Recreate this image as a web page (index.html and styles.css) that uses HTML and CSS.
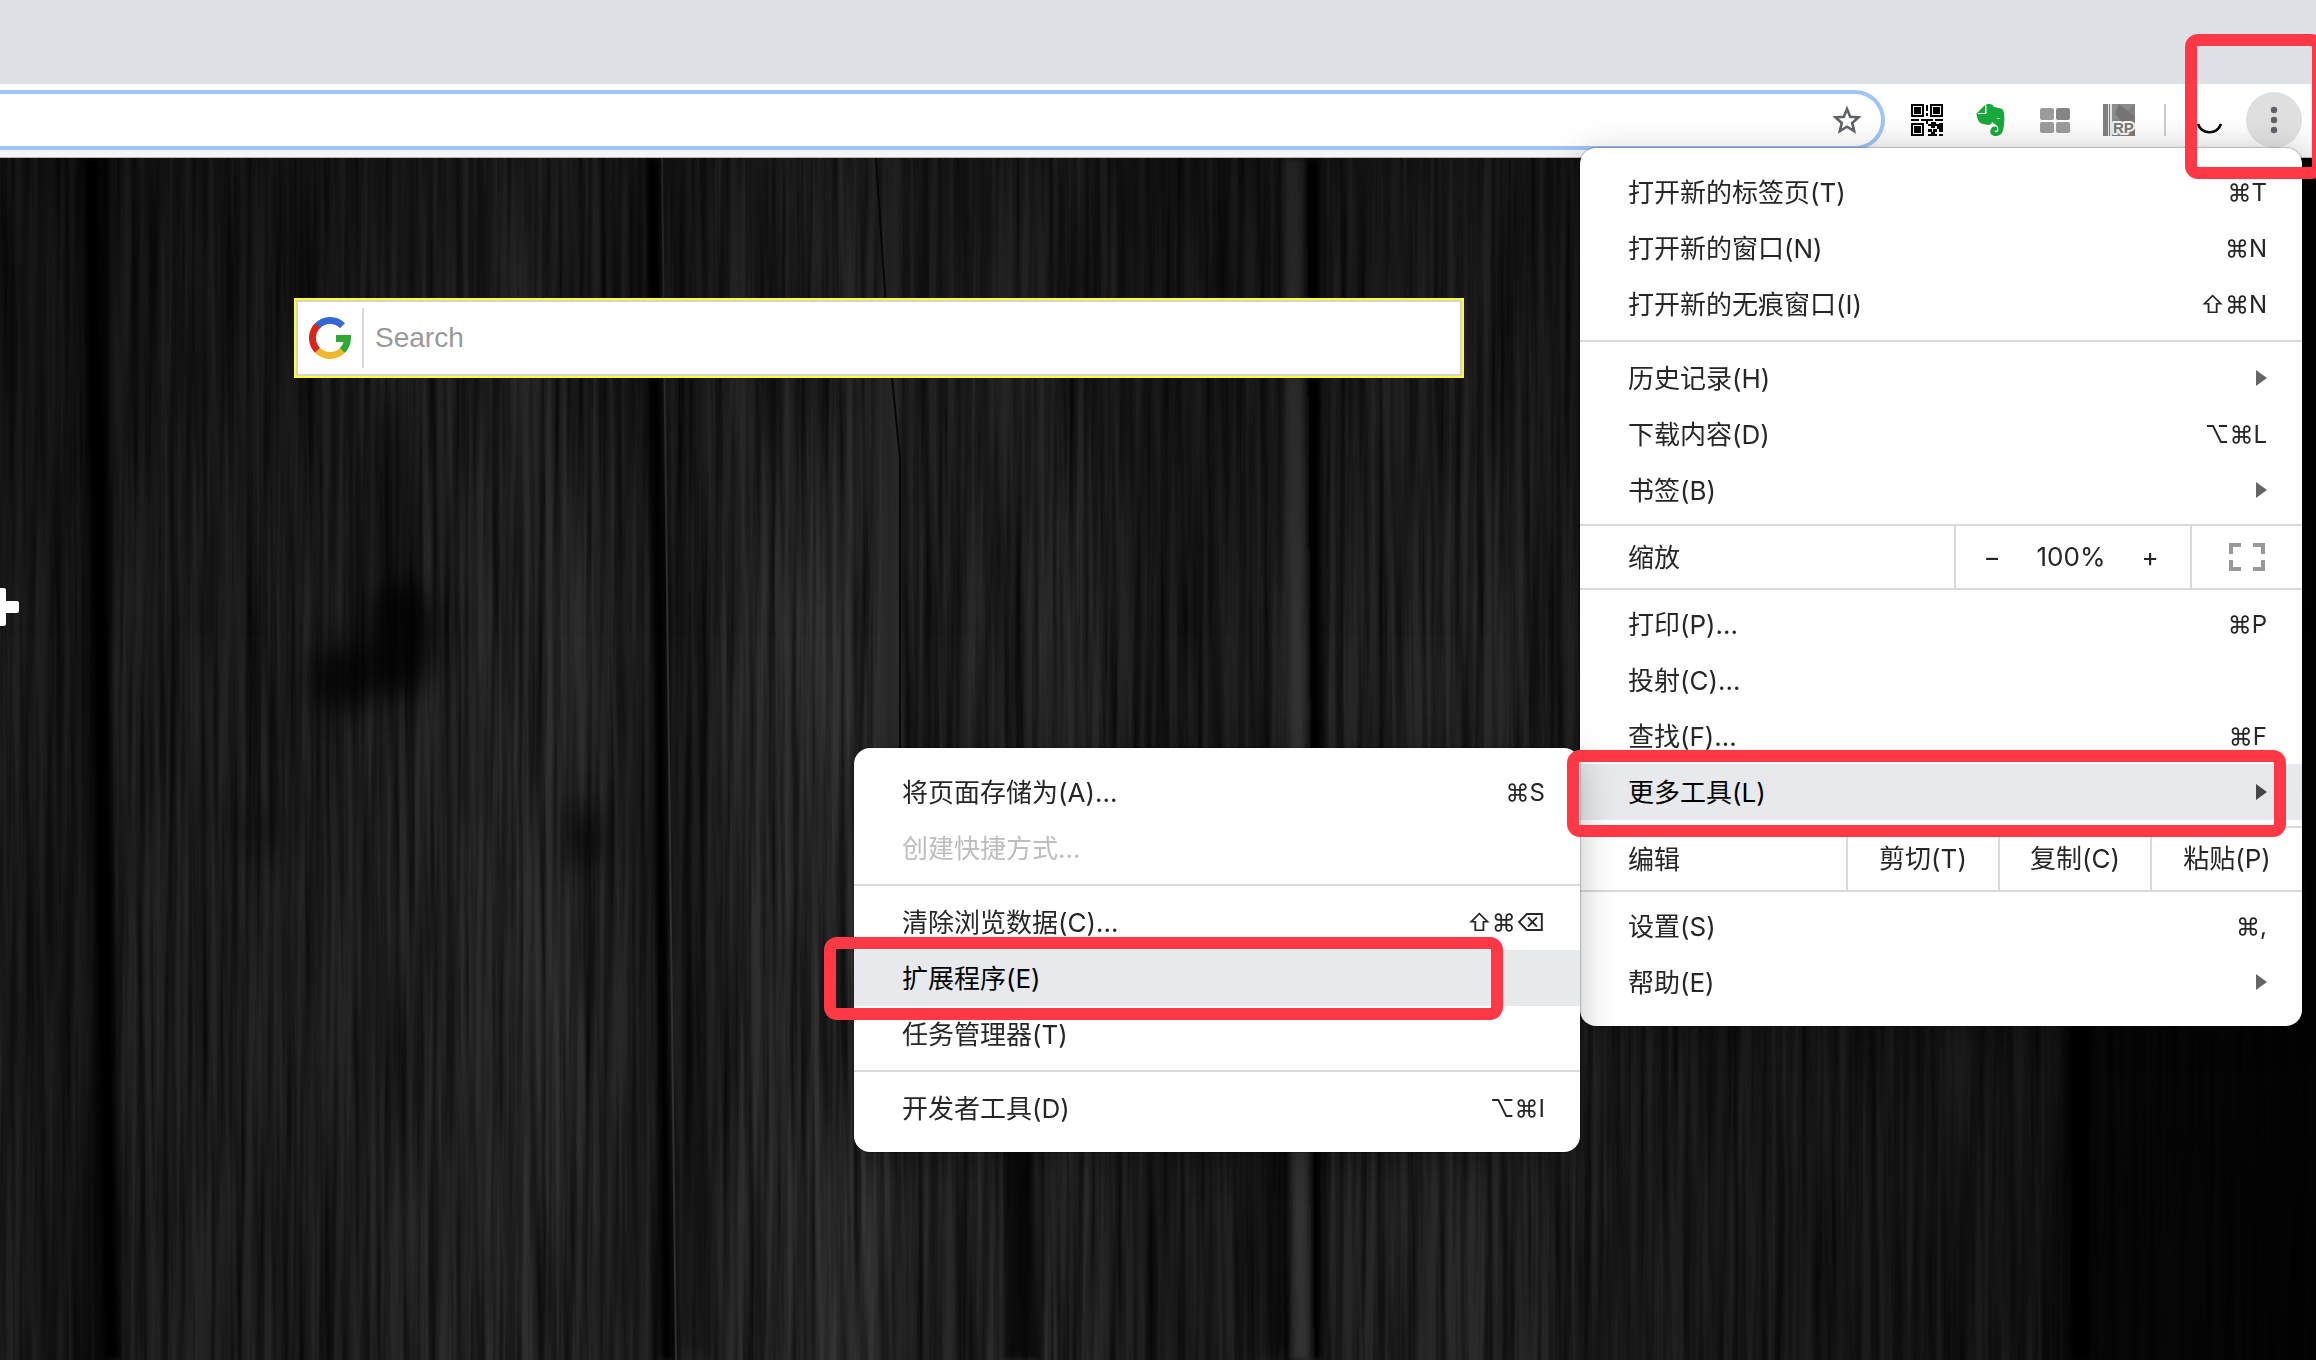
FILE: index.html
```html
<!DOCTYPE html>
<html lang="zh-CN">
<head>
<meta charset="utf-8">
<title>新标签页</title>
<link rel="stylesheet" href="styles.css">
</head>
<body>
<header class="chrome">
  <div class="tab-strip"></div>
  <div class="toolbar">
    <div class="omnibox">
      <input class="omnibox-input" type="text" aria-label="地址栏">
      <button class="icon-button" type="button" aria-label="添加书签">
        <svg width="32" height="32" viewBox="0 0 32 32"><path d="M16 5l3.200 7.700 8.300.7-6.300 5.500 1.900 8.100L16 22.700 8.900 27l1.900-8.100-6.300-5.500 8.300-.7z" fill="none" stroke="#5f6368" stroke-width="2.600"/></svg>
      </button>
    </div>
    <div class="extensions">
      <button class="icon-button" type="button" aria-label="二维码">
        <svg width="32" height="32" viewBox="0 0 32 32"><path d="M0 0h13v13H0zM19 0h13v13H19zM0 19h13v13H0z" fill="#000"/><path d="M2 2h9v9H2zM21 2h9v9h-9zM2 21h9v9H2z" fill="#fff"/><path d="M3 3h7v7H3zM22 3h7v7h-7zM3 22h7v7H3z" fill="#000"/><path d="M15 1h2v6h-2zM15 9h2v3h-2zM0 15h8v2H0zM10 15h12v2h-5v3h-2v-3h-5zM24 15h8v2h-8zM20 18h5v2h3v-1h4v9h-4v-3h-2v3h-4v-3h4v-3h-2v2h-4v-2h-3v-2h3zM17 25h4v3h3v2h2v2h-9v-2h3v-2h-3zM28 30h4v2h-4z" fill="#000"/></svg>
      </button>
      <button class="icon-button" type="button" aria-label="Evernote">
        <svg width="32" height="32" viewBox="0 0 32 32"><path d="M11 1c2-2 7-1 8 2 3 1 7 1 8 2 2 1 3 7 2 15-.5 7-2 12-8 12-5 0-7-4-5-7 1-3 6-3 6-1v3c-2-1-3 0-2 1 3 1 4-2 3-5-1-2-4-3-6-5-1 4-5 3-9 2C4 19 2 16 1.500 9H11z" fill="#19a83b"/><path d="M2 9l8-8v8z" fill="#19a83b"/><path d="M3 9.500h8V2" fill="none" stroke="#fff" stroke-width="1"/><path d="M21.500 15q2-2 4 0z" fill="#fff"/></svg>
      </button>
      <button class="icon-button" type="button" aria-label="标签页网格">
        <svg width="32" height="32" viewBox="0 0 32 32"><g fill="#9b9b9b"><rect x="1" y="4" width="14" height="12" rx="2"/><rect x="17" y="4" width="14" height="12" rx="2" fill="#858585"/><rect x="1" y="18" width="14" height="11" rx="2"/><rect x="17" y="18" width="14" height="11" rx="2"/></g></svg>
      </button>
      <button class="icon-button" type="button" aria-label="RP">
        <svg width="32" height="32" viewBox="0 0 32 32"><path d="M0 0h32v32H0z" fill="#808080"/><path d="M9 0h23L9 20z" fill="#8c8c8c"/><path d="M16 0l16 13v19L12 10z" fill="#747474"/><path d="M5 0h1v32H5zM7 0h2v32H7z" fill="#e4e4e4"/><text x="10" y="29" class="rp-text">RP</text></svg>
      </button>
    </div>
    <span class="toolbar-divider"></span>
    <button class="icon-button profile" type="button" aria-label="用户">
      <svg width="32" height="32" viewBox="0 0 32 32"><path d="M4 20c4 11 19 11 23 0" fill="none" stroke="#000" stroke-width="2.600"/></svg>
    </button>
    <button class="more-button" type="button" aria-label="自定义及控制">
      <svg width="56" height="56" viewBox="0 0 56 56" fill="#5f6368"><circle cx="28" cy="18" r="3.200"/><circle cx="28" cy="28" r="3.200"/><circle cx="28" cy="38" r="3.200"/></svg>
    </button>
  </div>
  <span class="mark mark-more"></span>
</header>

<main class="page">
  <svg class="wood" viewBox="0 0 2316 1202" preserveAspectRatio="none" aria-hidden="true">
    <defs>
      <filter id="grain" x="0" y="0" width="100%" height="100%">
        <feTurbulence type="fractalNoise" baseFrequency="0.13 0.003" numOctaves="3" seed="8"/>
        <feColorMatrix values="0 0 0 0 0  0 0 0 0 0  0 0 0 0 0  1.300 0 0 0 -0.380"/>
      </filter>
      <filter id="soft" x="-100%" y="-50%" width="300%" height="200%"><feGaussianBlur stdDeviation="14"/></filter>
      <filter id="edge" x="-20" y="-20" width="2400" height="1300" filterUnits="userSpaceOnUse"><feGaussianBlur stdDeviation="3"/></filter>
      <linearGradient id="planks">
        <stop offset="0" stop-color="#222"/><stop offset=".035" stop-color="#1a1a1a"/><stop offset=".046" stop-color="#090909"/>
        <stop offset=".05" stop-color="#232323"/><stop offset=".14" stop-color="#242424"/><stop offset=".24" stop-color="#303030"/><stop offset=".275" stop-color="#242424"/>
        <stop offset=".29" stop-color="#282828"/><stop offset=".34" stop-color="#303030"/><stop offset=".38" stop-color="#343434"/><stop offset=".39" stop-color="#262626"/>
        <stop offset=".46" stop-color="#2d2d2d"/><stop offset=".5" stop-color="#1f1f1f"/><stop offset=".55" stop-color="#222"/>
        <stop offset=".58" stop-color="#262626"/><stop offset=".64" stop-color="#2a2a2a"/><stop offset=".7" stop-color="#202020"/>
        <stop offset=".88" stop-color="#191919"/><stop offset=".9" stop-color="#090909"/><stop offset="1" stop-color="#030303"/>
      </linearGradient>
      <linearGradient id="fade" x2="0" y2="1"><stop offset="0" stop-color="#000" stop-opacity=".3"/><stop offset=".4" stop-color="#000" stop-opacity="0"/></linearGradient>
    </defs>
    <rect width="2316" height="1202" fill="url(#planks)"/>
    <rect width="2316" height="1202" filter="url(#grain)"/>
    <g filter="url(#soft)" fill="#000">
      <ellipse cx="400" cy="480" rx="34" ry="60" opacity=".8"/>
      <ellipse cx="345" cy="520" rx="34" ry="34" opacity=".7"/>
      <ellipse cx="390" cy="350" rx="18" ry="120" opacity=".4"/>
      <ellipse cx="585" cy="680" rx="18" ry="36" opacity=".6"/>
      <ellipse cx="260" cy="670" rx="26" ry="26" opacity=".3"/>
      <path d="M1265 1202l5-320h30v320z" opacity=".7"/>
      <path d="M672 0h14l30 1202h-40z" opacity=".45"/>
    </g>
    <g filter="url(#edge)">
      <path d="M84 0h14l22 1202h-16z" fill="#000"/>
      <path d="M647 0h12l14 1202h-12z" fill="#000"/>
      <path d="M1284 0h18l8 1202h-18z" fill="#303030"/>
      <path d="M1306 0h14l2 1202h-12z" fill="#000"/>
      <path d="M884 0h20l-4 600h-24z" fill="#2c2c2c" opacity=".7"/>
      <path d="M1004 800h26l10 402h-36z" fill="#000" opacity=".7"/>
      <path d="M2070 860h20v342h-20z" fill="#000"/>
    </g>
    <path d="M876 0l12 180 12 120v400" fill="none" stroke="#080808" stroke-width="2"/>
    <path d="M662 0l14 1202" fill="none" stroke="#303030" stroke-width="2"/>
    <rect width="2316" height="1202" fill="url(#fade)"/>
  </svg>
  <form class="search">
    <svg width="42" height="42" viewBox="0 0 42 42" fill="none" stroke-width="7" aria-hidden="true"><path d="M8.300 9.200A17.500 17.500 0 0 1 33.500 8.700" stroke="#3367d6"/><path d="M8.700 33.500A17.500 17.500 0 0 1 8.700 8.500" stroke="#d9261c"/><path d="M33.400 33.400A17.500 17.500 0 0 1 8.600 33.400" stroke="#f0b92d"/><path d="M27 21.500h11.500a17.500 17.500 0 0 1-5.200 12" stroke="#2fa836"/></svg>
    <input class="search-input" type="text" placeholder="Search" aria-label="Search">
  </form>
  <button class="add-button" type="button" aria-label="添加">
    <svg width="20" height="40" viewBox="0 0 20 40"><path d="M-6 3q0-2 2-2h8q2 0 2 2v11h11q2 0 2 2v8q0 2-2 2H6v11q0 2-2 2h-8z" fill="#fff"/></svg>
  </button>
</main>

<nav class="menu main-menu" aria-label="菜单">
  <div class="group">
    <button class="item" type="button"><span>打开新的标签页(T)</span><kbd>⌘T</kbd></button>
    <button class="item" type="button"><span>打开新的窗口(N)</span><kbd>⌘N</kbd></button>
    <button class="item" type="button"><span>打开新的无痕窗口(I)</span><kbd>⇧⌘N</kbd></button>
  </div>
  <div class="group snug">
    <button class="item" type="button"><span>历史记录(H)</span><i class="arrow"></i></button>
    <button class="item" type="button"><span>下载内容(D)</span><kbd>⌥⌘L</kbd></button>
    <button class="item" type="button"><span>书签(B)</span><i class="arrow"></i></button>
  </div>
  <div class="strip">
    <span class="strip-label">缩放</span>
    <div class="zoom-cell">
      <button class="zoom-step" type="button" aria-label="缩小">−</button>
      <span class="zoom-value">100%</span>
      <button class="zoom-step" type="button" aria-label="放大">+</button>
    </div>
    <button class="strip-cell" type="button" aria-label="全屏">
      <svg width="36" height="28" viewBox="0 0 36 28" fill="none" stroke="#999" stroke-width="4"><path d="M2 11V2h10M24 2h10v9M34 17v9H24M12 26H2v-9"/></svg>
    </button>
  </div>
  <div class="group snug">
    <button class="item" type="button"><span>打印(P)...</span><kbd>⌘P</kbd></button>
    <button class="item" type="button"><span>投射(C)...</span></button>
    <button class="item" type="button"><span>查找(F)...</span><kbd>⌘F</kbd></button>
    <div class="anchor">
      <button class="item selected" type="button"><span>更多工具(L)</span><i class="arrow"></i></button>
      <div class="menu submenu">
        <div class="group">
          <button class="item" type="button"><span>将页面存储为(A)...</span><kbd>⌘S</kbd></button>
          <button class="item" type="button" disabled><span>创建快捷方式...</span></button>
        </div>
        <div class="group">
          <button class="item" type="button"><span>清除浏览数据(C)...</span><kbd>⇧⌘⌫</kbd></button>
          <div class="anchor">
            <button class="item selected" type="button"><span>扩展程序(E)</span></button>
            <span class="mark mark-extensions"></span>
          </div>
          <button class="item" type="button"><span>任务管理器(T)</span></button>
        </div>
        <div class="group">
          <button class="item" type="button"><span>开发者工具(D)</span><kbd>⌥⌘I</kbd></button>
        </div>
      </div>
      <span class="mark mark-tools"></span>
    </div>
  </div>
  <div class="strip">
    <span class="strip-label">编辑</span>
    <button class="strip-cell" type="button">剪切(T)</button>
    <button class="strip-cell" type="button">复制(C)</button>
    <button class="strip-cell" type="button">粘贴(P)</button>
  </div>
  <div class="group snug">
    <button class="item" type="button"><span>设置(S)</span><kbd>⌘,</kbd></button>
    <button class="item" type="button"><span>帮助(E)</span><i class="arrow"></i></button>
  </div>
</nav>
</body>
</html>
```
FILE: styles.css
```css
* { box-sizing: border-box; }

body {
  margin: 0;
  min-height: 100vh;
  display: flex;
  flex-direction: column;
  position: relative;
  overflow: hidden;
  background: #1a1a1a;
  color: #262626;
  font-family: Inter, "Noto Sans CJK SC", sans-serif;
  font-size: 26px;
  line-height: 32px;
}

button {
  margin: 0;
  padding: 0;
  border: 0;
  background: none;
  color: inherit;
  font: inherit;
}

svg { display: block; }

/* Browser frame */
.chrome { position: relative; }

.tab-strip {
  height: 84px;
  background: #dee1e6;
}

.toolbar {
  height: 74px;
  display: flex;
  align-items: center;
  padding: 0 14px 2px 0;
  background: linear-gradient(#fff 50%, #f4f4f4);
  border-bottom: 1px solid #b8b8b8;
}

.omnibox {
  flex: 1;
  height: 60px;
  display: flex;
  align-items: center;
  padding-right: 18px;
  background: #fff;
  border: 4px solid #a0c3f9;
  border-left: 0;
  border-radius: 0 30px 30px 0;
}

.omnibox-input {
  flex: 1;
  height: 48px;
  border: 0;
  outline: 0;
  background: transparent;
  font: inherit;
}

.extensions {
  display: flex;
  gap: 32px;
  padding: 0 29px 0 26px;
}

.rp-text {
  font: bold 15px "Liberation Sans", sans-serif;
  fill: #777;
  stroke: #f4f4f4;
  stroke-width: 4px;
  stroke-linejoin: round;
  paint-order: stroke;
}

.toolbar-divider {
  width: 2px;
  height: 32px;
  background: #ccc;
}

.profile { margin: 0 20px 0 28px; }

.more-button {
  border-radius: 50%;
  background: #dfdfdf;
}

/* New tab page */
.page {
  flex: 1;
  position: relative;
  padding: 140px 0 0 294px;
}

.wood {
  position: absolute;
  inset: 0;
  width: 100%;
  height: 100%;
}

.search {
  position: relative;
  width: 1170px;
  max-width: 60%;
  height: 80px;
  display: flex;
  align-items: center;
  gap: 11px;
  padding-left: 13px;
  background: #fff;
  border: 2px solid #ffff2e;
  box-shadow: inset 0 0 0 2px #d4d4d4;
}

.search-input {
  flex: 1;
  height: 60px;
  margin-right: 8px;
  padding: 0 11px;
  border: 0;
  border-left: 2px solid #d9d9d9;
  outline: 0;
  background: transparent;
  font: 28px "Liberation Sans", Arial, sans-serif;
}

.search-input::placeholder { color: #999; opacity: 1; }

.add-button {
  position: absolute;
  top: 429px;
  left: 0;
}

/* Menus */
.menu {
  padding: 16px 0;
  background: #fff;
  border-radius: 16px;
  box-shadow: 0 0 1px 1px rgba(0, 0, 0, .2), 0 8px 36px rgba(0, 0, 0, .25);
}

.main-menu {
  position: absolute;
  top: 148px;
  right: 14px;
  width: 722px;
}

.submenu {
  position: absolute;
  top: -16px;
  right: 100%;
  width: 726px;
}

.anchor { position: relative; }

.group + .group {
  margin-top: 8px;
  padding-top: 8px;
  border-top: 2px solid #d9d9d9;
}

.strip + .group { padding-top: 6px; }

.item {
  width: 100%;
  height: 56px;
  display: flex;
  align-items: center;
  justify-content: space-between;
  padding: 2px 35px 0 48px;
  text-align: left;
}

.item:disabled { color: #bdbdbd; }

.selected {
  background: #e8e9ed;
  color: #000;
}

kbd {
  font-family: inherit;
  font-size: 24px;
}

.arrow {
  margin-bottom: 2px;
  border: 8px solid transparent;
  border-left: 11px solid #666;
  border-right: 0;
}

.selected .arrow { border-left-color: #444; }

.strip {
  height: 66px;
  display: flex;
  margin-top: 6px;
  border: solid #d9d9d9;
  border-width: 2px 0;
}

.strip-label {
  flex: 1;
  display: flex;
  align-items: center;
  padding: 2px 0 0 48px;
}

.strip-cell {
  width: 152px;
  display: flex;
  align-items: center;
  justify-content: center;
  border-left: 2px solid #d9d9d9;
}

.zoom-cell {
  width: 236px;
  display: flex;
  align-items: center;
  justify-content: space-between;
  padding: 0 30px 0 26px;
  border-left: 2px solid #d9d9d9;
}

.zoom-cell + .strip-cell { width: 112px; }

.zoom-step { width: 20px; }

/* Red highlight frames */
.mark {
  position: absolute;
  border: 12px solid #ff3845;
  border-radius: 13px;
  pointer-events: none;
}

.mark-more {
  z-index: 3;
  top: 34px;
  right: -8px;
  width: 139px;
  height: 145px;
}

.mark-tools {
  top: -14px;
  left: -13px;
  right: 16px;
  height: 87px;
}

.mark-extensions {
  top: -13px;
  left: -30px;
  right: 77px;
  height: 83px;
}
```
